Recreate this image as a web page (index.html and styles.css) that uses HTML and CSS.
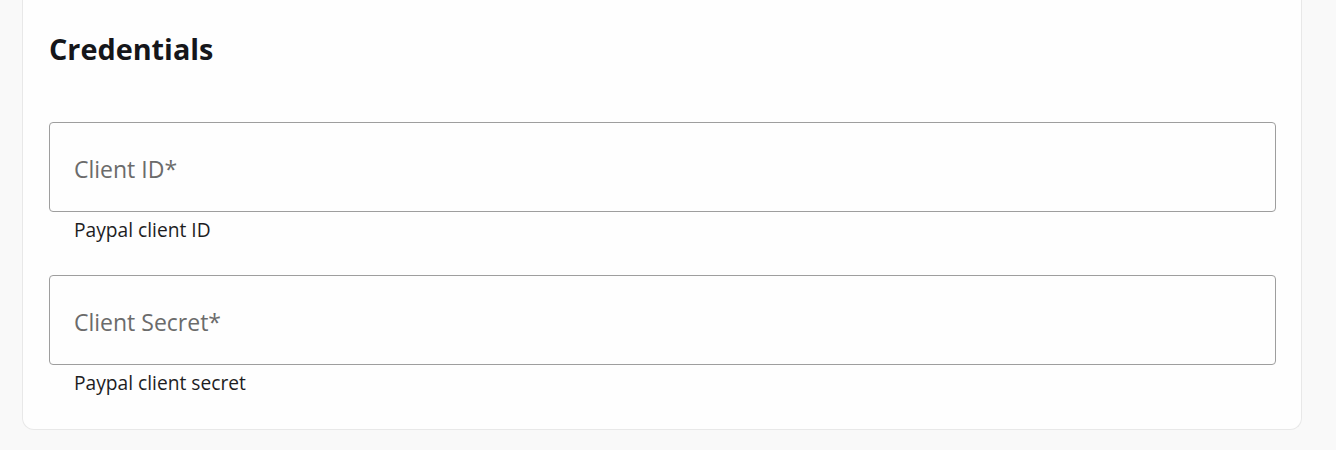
FILE: index.html
```html
<!DOCTYPE html>
<html lang="en">
<head>
<meta charset="utf-8">
<title>Credentials</title>
<link rel="stylesheet" href="styles.css">
</head>
<body>
<section class="card">
  <h2 class="title">Credentials</h2>
  <div class="fields">
    <div class="field">
      <label class="input"><span class="placeholder">Client ID*</span></label>
      <p class="helper">Paypal client ID</p>
    </div>
    <div class="field">
      <label class="input"><span class="placeholder">Client Secret*</span></label>
      <p class="helper">Paypal client secret</p>
    </div>
  </div>
</section>
</body>
</html>
```
FILE: styles.css
```css
html, body {
  margin: 0;
  padding: 0;
  background: #f9f9f9;
  font-family: "Open Sans", "Noto Sans", sans-serif;
}
.card {
  margin: 0 34px 0 22px;
  width: 1280px;
  box-sizing: border-box;
  background: #fefefe;
  border: 1px solid #e8e8e8;
  border-top: none;
  border-radius: 0 0 12px 12px;
  padding: 29px 25px 33px 26px;
}
.title {
  margin: 0;
  font-size: 28.8px;
  line-height: 40px;
  font-weight: 700;
  color: #15161a;
}
.fields {
  margin-top: 53px;
  display: flex;
  flex-direction: column;
  gap: 32px;
}
.field {
  display: flex;
  flex-direction: column;
}
.input {
  display: flex;
  align-items: center;
  box-sizing: border-box;
  height: 90px;
  border: 1px solid #9e9e9e;
  border-radius: 4px;
  padding: 4px 24px 0;
}
.placeholder {
  font-size: 23px;
  line-height: 32px;
  color: #6b6b6b;
}
.helper {
  margin: 5px 0 0 25px;
  font-size: 19.2px;
  line-height: 26px;
  color: #1d1d1f;
}
```
